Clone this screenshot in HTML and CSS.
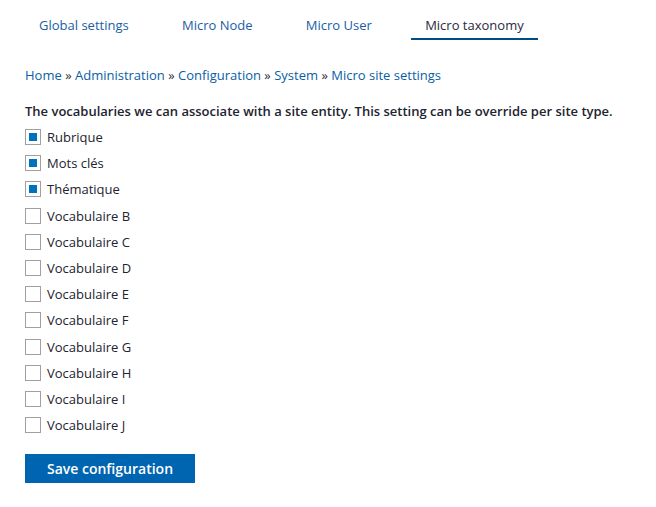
FILE: index.html
```html
<!DOCTYPE html>
<html>
<head>
<meta charset="utf-8">
<link rel="stylesheet" href="styles.css">
</head>
<body>
<div class="page">
  <nav class="tabs">
    <a class="tab">Global settings</a>
    <a class="tab">Micro Node</a>
    <a class="tab">Micro User</a>
    <a class="tab active">Micro taxonomy</a>
  </nav>
  <div class="breadcrumb">
    <a>Home</a> <span class="sep">»</span> <a>Administration</a> <span class="sep">»</span> <a>Configuration</a> <span class="sep">»</span> <a>System</a> <span class="sep">»</span> <a>Micro site settings</a>
  </div>
  <p class="desc">The vocabularies we can associate with a site entity. This setting can be override per site type.</p>
  <ul class="checks">
    <li><span class="box checked"></span>Rubrique</li>
    <li><span class="box checked"></span>Mots clés</li>
    <li><span class="box checked"></span>Thématique</li>
    <li><span class="box"></span>Vocabulaire B</li>
    <li><span class="box"></span>Vocabulaire C</li>
    <li><span class="box"></span>Vocabulaire D</li>
    <li><span class="box"></span>Vocabulaire E</li>
    <li><span class="box"></span>Vocabulaire F</li>
    <li><span class="box"></span>Vocabulaire G</li>
    <li><span class="box"></span>Vocabulaire H</li>
    <li><span class="box"></span>Vocabulaire I</li>
    <li><span class="box"></span>Vocabulaire J</li>
  </ul>
  <button class="save">Save configuration</button>
</div>
</body>
</html>
```
FILE: styles.css
```css
html, body {
  margin: 0;
  padding: 0;
  background: #ffffff;
}
body {
  font-family: "Open Sans", "Liberation Sans", sans-serif;
  font-size: 13px;
  color: #222330;
}
.page {
  padding: 0 25px;
}
.tabs {
  display: flex;
  gap: 25.3px;
  padding-top: 15px;
}
.tab {
  padding: 0 14px;
  height: 25px;
  line-height: 20px;
  font-size: 13px;
  color: #1a5ea5;
  border-bottom: 2px solid transparent;
  box-sizing: border-box;
}
.tab.active {
  color: #2a2a40;
  border-bottom-color: #004d85;
}
.breadcrumb {
  margin-top: 25px;
  line-height: 20px;
  color: #333;
}
.breadcrumb a {
  color: #0a5ea6;
}
.desc {
  margin: 16px 0 0;
  font-weight: 600;
  line-height: 20px;
}
.checks {
  list-style: none;
  margin: 3px 0 0;
  padding: 0;
}
.checks li {
  display: flex;
  align-items: center;
  height: 26.2px;
  gap: 6px;
}
.box {
  width: 16px;
  height: 16px;
  box-sizing: border-box;
  border: 1px solid #a0a0a0;
  background: #fff;
  display: flex;
  align-items: center;
  justify-content: center;
}
.box.checked::after {
  content: "";
  width: 8px;
  height: 8px;
  background: #0071bc;
}
.save {
  margin-top: 16px;
  width: 170px;
  height: 29px;
  border: 0;
  background: #0065b1;
  color: #fff;
  font-family: "Open Sans", "Liberation Sans", sans-serif;
  font-size: 14px;
  font-weight: 600;
  padding: 0;
}
```
